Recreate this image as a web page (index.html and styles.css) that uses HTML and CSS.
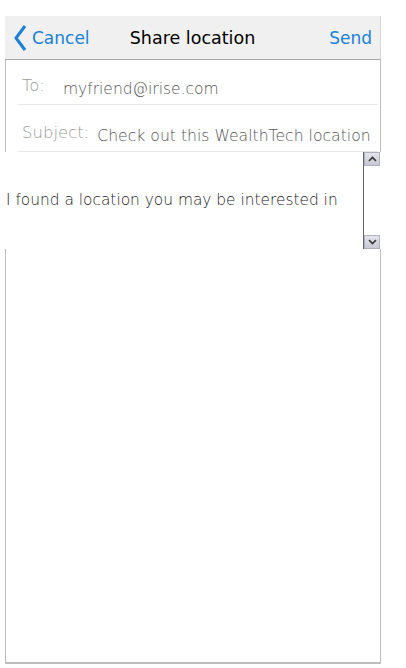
FILE: index.html
```html
<!DOCTYPE html>
<html>
<head>
<meta charset="utf-8">
<link rel="stylesheet" href="styles.css">
</head>
<body>
<div class="frame">
  <div class="header">
    <div class="cancel">
      <svg class="chev" width="14" height="28" viewBox="0 0 14 28"><path d="M12 2 L3 14 L12 26" fill="none" stroke="#1a80d9" stroke-width="3"/></svg>
      <span>Cancel</span>
    </div>
    <div class="title">Share location</div>
    <div class="send">Send</div>
  </div>
  <div class="fields">
    <div class="row row-to"><span class="label">To:</span><span class="value">myfriend@irise.com</span></div>
    <div class="row row-subj"><span class="label">Subject:</span><span class="value">Check out this WealthTech location</span></div>
  </div>
  <div class="message">
    <div class="msg-text">I found a location you may be interested in</div>
    <div class="scrollbar">
      <div class="sb-btn"><svg width="9" height="6" viewBox="0 0 9 6"><path d="M1 5 L4.5 1.5 L8 5" fill="none" stroke="#333" stroke-width="1.6"/></svg></div>
      <div class="sb-track"></div>
      <div class="sb-btn"><svg width="9" height="6" viewBox="0 0 9 6"><path d="M1 1 L4.5 4.5 L8 1" fill="none" stroke="#333" stroke-width="1.6"/></svg></div>
    </div>
  </div>
  <div class="rest"></div>
</div>
</body>
</html>
```
FILE: styles.css
```css
html, body { margin: 0; padding: 0; background: #fff; }
body { font-family: "DejaVu Sans", Verdana, sans-serif; }
.frame {
  margin: 16px 0 0 5px;
  width: 376px;
  height: 648px;
  display: flex;
  flex-direction: column;
  box-sizing: border-box;
}
.header {
  height: 44px;
  flex: none;
  background: #f0f0f0;
  border-bottom: 1px solid #a8a8a8;
  border-right: 1px solid #d8d8d8;
  box-sizing: border-box;
  display: flex;
  align-items: center;
  position: relative;
}
.cancel {
  display: flex;
  align-items: center;
  color: #1a80d9;
  font-size: 17px;
  margin-left: 8px;
  gap: 5px;
}
.chev { display: block; margin-top: 1px; }
.title {
  position: absolute;
  left: 0; right: 0;
  text-align: center;
  font-size: 17.5px;
  color: #000;
  pointer-events: none;
}
.send {
  margin-left: auto;
  margin-right: 8px;
  color: #1a80d9;
  font-size: 17px;
}
.fields {
  flex: none;
  border-left: 1px solid #bdbdbd;
  border-right: 1px solid #bdbdbd;
  padding-left: 12px;
  padding-right: 2px;
}
.row {
  display: flex;
  align-items: flex-end;
  border-bottom: 1px solid #e8e8e8;
  box-sizing: border-box;
  padding-bottom: 6px;
}
.row-to { height: 45px; }
.row-subj { height: 47px; }
.label {
  color: #9a9a9a;
  font-size: 16.5px;
  font-weight: 200;
  margin-left: 4px;
  margin-bottom: 3px;
}
.value {
  color: #555;
  font-size: 15.5px;
  font-weight: 200;
}
.row-to .value { margin-left: 18px; }
.row-subj .value { margin-left: 8px; font-size: 15.65px; }
.message {
  flex: none;
  margin-left: -5px;
  width: 381px;
  height: 97px;
  background: #fff;
  display: flex;
}
.msg-text {
  flex: 1;
  display: flex;
  align-items: center;
  padding-left: 6px;
  font-size: 15.4px;
  font-weight: 200;
  color: #222;
  padding-bottom: 1px;
}
.scrollbar {
  width: 16px;
  margin-right: 1px;
  display: flex;
  flex-direction: column;
  border-left: 1px solid #666;
}
.sb-btn {
  height: 12px;
  background: linear-gradient(#e4e4ec, #c8c8d4);
  border: 1px solid #b0b0bc;
  display: flex;
  align-items: center;
  justify-content: center;
}
.sb-track { flex: 1; background: #fff; }
.rest {
  flex: 1;
  border-left: 1px solid #bdbdbd;
  border-right: 1px solid #bdbdbd;
  border-bottom: 2px solid #bdbdbd;
}
```
